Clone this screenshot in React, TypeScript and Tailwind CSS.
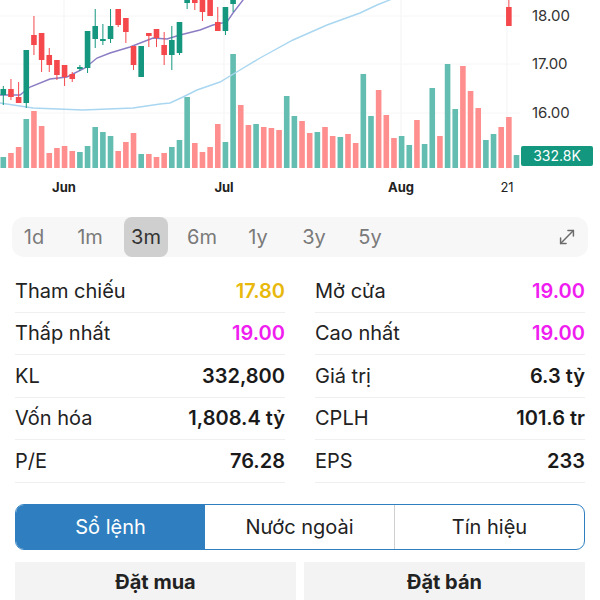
import React from "react";
import { MoveDiagonal } from "lucide-react";

type Dir = "t" | "p";

const TEAL = "#14967f";
const RED = "#f5484d";
const VOL_TEAL = "#63bdb0";
const VOL_RED = "#ff8f8f";

// [color, top of bar]; bars stand on y=168
const volumes: [Dir, number][] = [
  ["t", 157], ["p", 153], ["p", 147], ["t", 119], ["p", 111], ["p", 126], ["p", 153], ["p", 148], ["p", 146], ["p", 151],
  ["t", 152], ["t", 146], ["t", 127], ["t", 132], ["t", 136], ["p", 151], ["p", 142], ["p", 133], ["t", 154], ["p", 154],
  ["p", 157], ["p", 153], ["t", 147], ["t", 140], ["t", 97], ["p", 143], ["p", 152], ["p", 147], ["p", 124], ["t", 142],
  ["t", 54], ["p", 105], ["p", 125], ["t", 124], ["p", 127], ["p", 128], ["p", 130], ["t", 96], ["t", 116], ["p", 121],
  ["p", 133], ["t", 132], ["p", 127], ["p", 136], ["t", 137], ["p", 134], ["p", 143], ["t", 74], ["t", 116], ["p", 90],
  ["p", 115], ["p", 138], ["t", 136], ["t", 145], ["p", 120], ["t", 144], ["t", 88], ["p", 136], ["t", 64], ["t", 109],
  ["p", 66], ["p", 91], ["p", 108], ["t", 140], ["t", 134], ["p", 127], ["p", 117], ["t", 155],
];

// [index, color, bodyTop, bodyBottom, wickTop, wickBottom]
const candles: [number, Dir, number, number, number, number][] = [
  [0, "t", 89, 95, 86, 105],
  [1, "p", 89, 97, 79, 100],
  [2, "p", 97, 103, 82, 103],
  [3, "t", 50, 103, 50, 108],
  [4, "p", 35, 45, 16, 55],
  [5, "p", 33, 60, 33, 72],
  [6, "p", 55, 65, 48, 72],
  [7, "p", 60, 75, 60, 80],
  [8, "p", 65, 77, 65, 86],
  [9, "p", 74, 79, 72, 82],
  [10, "t", 67, 69, 65, 71],
  [11, "t", 31, 68, 31, 73],
  [12, "t", 26, 39, 9, 48],
  [13, "t", 39, 41, 24, 45],
  [14, "t", 26, 39, 9, 43],
  [15, "p", 9, 25, 9, 27],
  [16, "p", 18, 32, 18, 43],
  [17, "p", 46, 65, 46, 70],
  [18, "t", 46, 77, 46, 77],
  [19, "p", 33, 36, 33, 47],
  [20, "p", 29, 38, 29, 47],
  [21, "p", 45, 55, 32, 65],
  [22, "t", 40, 55, 26, 70],
  [23, "t", 22, 53, 22, 55],
  [24, "t", -5, 3, -5, 9],
  [25, "p", -5, 3, -5, 10],
  [26, "p", -5, 12, -5, 21],
  [27, "p", -5, 16, -5, 16],
  [28, "p", 22, 31, 7, 31],
  [29, "t", 7, 31, 7, 35],
  [30, "t", -5, 4, -5, 12],
  [66, "p", 7, 26, -2, 26],
];

const maShort =
  "0,95 20,95 30,87 50,79 67,77 85,68 97,58 110,53 130,47 153,38 167,39 180,35 200,30 213,25 227,22 233,13 243,0 246,-4";
const maLong =
  "0,103 33,108 83,110 133,108 160,104 170,103 183,97 197,90 220,82 240,70 260,58 293,40 327,25 360,13 377,5 392,-1";

const barX = (i: number) => 0.5 + 7.66 * i;

const PriceChart = () => (
  <svg width={600} height={200} viewBox="0 0 600 200" className="block">
    {[64, 224, 401, 507].map((x) => (
      <line key={x} x1={x} y1={0} x2={x} y2={170} stroke="#f3f3f3" strokeWidth={1} />
    ))}
    {[16, 64, 113].map((y) => (
      <line key={y} x1={0} y1={y} x2={520} y2={y} stroke="#f6f6f6" strokeWidth={1} />
    ))}
    {volumes.map(([d, top], i) => (
      <rect
        key={i}
        x={barX(i)}
        y={top}
        width={5.6}
        height={168 - top}
        fill={d === "t" ? VOL_TEAL : VOL_RED}
      />
    ))}
    <polyline points={maLong} fill="none" stroke="#a9d6f0" strokeWidth={1.4} />
    <polyline points={maShort} fill="none" stroke="#8c7cc4" strokeWidth={1.4} />
    {candles.map(([i, d, bt, bb, wt, wb]) => {
      const c = d === "t" ? TEAL : RED;
      const cx = barX(i) + 2.8;
      return (
        <g key={i}>
          <line x1={cx} y1={wt} x2={cx} y2={wb} stroke={c} strokeWidth={1} />
          <rect x={barX(i)} y={bt} width={5.6} height={Math.max(bb - bt, 1.5)} fill={c} />
        </g>
      );
    })}
    <g fontFamily="Inter, 'Noto Sans', sans-serif" fontSize={15} fill="#333">
      <text x={532} y={21}>18.00</text>
      <text x={532} y={69}>17.00</text>
      <text x={532} y={118}>16.00</text>
    </g>
    <rect x={521} y={146} width={72} height={20} rx={2} fill="#13977f" />
    <text
      x={557}
      y={161}
      textAnchor="middle"
      fontFamily="Inter, 'Noto Sans', sans-serif"
      fontSize={14}
      fill="#fff"
    >
      332.8K
    </text>
    <g fontFamily="Inter, 'Noto Sans', sans-serif" fontSize={13} fill="#222" textAnchor="middle">
      <text x={64} y={192} fontWeight={700}>Jun</text>
      <text x={224} y={192} fontWeight={700}>Jul</text>
      <text x={401} y={192} fontWeight={700}>Aug</text>
      <text x={507} y={192}>21</text>
    </g>
  </svg>
);

const ranges = ["1d", "1m", "3m", "6m", "1y", "3y", "5y"];

const stats: { label: string; value: string; color?: string }[][] = [
  [
    { label: "Tham chiếu", value: "17.80", color: "text-[#e8b80c]" },
    { label: "Mở cửa", value: "19.00", color: "text-[#f01df0]" },
  ],
  [
    { label: "Thấp nhất", value: "19.00", color: "text-[#f01df0]" },
    { label: "Cao nhất", value: "19.00", color: "text-[#f01df0]" },
  ],
  [
    { label: "KL", value: "332,800" },
    { label: "Giá trị", value: "6.3 tỷ" },
  ],
  [
    { label: "Vốn hóa", value: "1,808.4 tỷ" },
    { label: "CPLH", value: "101.6 tr" },
  ],
  [
    { label: "P/E", value: "76.28" },
    { label: "EPS", value: "233" },
  ],
];

export default function App() {
  return (
    <div className="w-[600px] h-[600px] overflow-hidden bg-white font-['Inter','Noto_Sans',sans-serif] text-[#222]">
      <PriceChart />

      {/* range picker */}
      <div className="mx-[12px] mt-[17px] h-[40px] flex items-center rounded-[12px] bg-[#f7f7f7]">
        <div className="flex h-full gap-[12px]">
          {ranges.map((r) => (
            <div
              key={r}
              className={
                r === "3m"
                  ? "w-[44px] h-full flex items-center justify-center rounded-[8px] bg-[#cfcfcf] text-[20px] text-[#333]"
                  : "w-[44px] h-full flex items-center justify-center text-[20px] text-[#7a7a7a]"
              }
            >
              {r}
            </div>
          ))}
        </div>
        <div className="ml-auto mr-[10px] text-[#6b6b6b]">
          <MoveDiagonal size={22} strokeWidth={1.6} />
        </div>
      </div>

      {/* stats */}
      <div className="mt-[13px] px-[15px] grid grid-cols-2 gap-x-[30px]">
        {stats.map((row) =>
          row.map((s) => (
            <div
              key={s.label}
              className="h-[42.5px] flex items-center justify-between border-b border-[#efefef] text-[20px]"
            >
              <span className="text-[#222]">{s.label}</span>
              <span className={`font-semibold ${s.color ?? "text-[#1a1a1a]"}`}>{s.value}</span>
            </div>
          ))
        )}
      </div>

      {/* segmented tabs */}
      <div className="mx-[15px] mt-[21px] h-[46px] flex rounded-[9px] border border-[#2f7fc0] overflow-hidden text-[20px]">
        <div className="flex-1 flex items-center justify-center bg-[#2f7fc0] text-white">Sổ lệnh</div>
        <div className="flex-1 flex items-center justify-center text-[#222]">Nước ngoài</div>
        <div className="flex-1 flex items-center justify-center border-l border-[#cfcfcf] text-[#222]">Tín hiệu</div>
      </div>

      <div className="mt-[12px] px-[15px] grid grid-cols-2 gap-[8px]">
        <div className="h-[40px] flex items-center justify-center bg-[#f3f3f3] text-[20px] font-bold">Đặt mua</div>
        <div className="h-[40px] flex items-center justify-center bg-[#f3f3f3] text-[20px] font-bold">Đặt bán</div>
      </div>
    </div>
  );
}
